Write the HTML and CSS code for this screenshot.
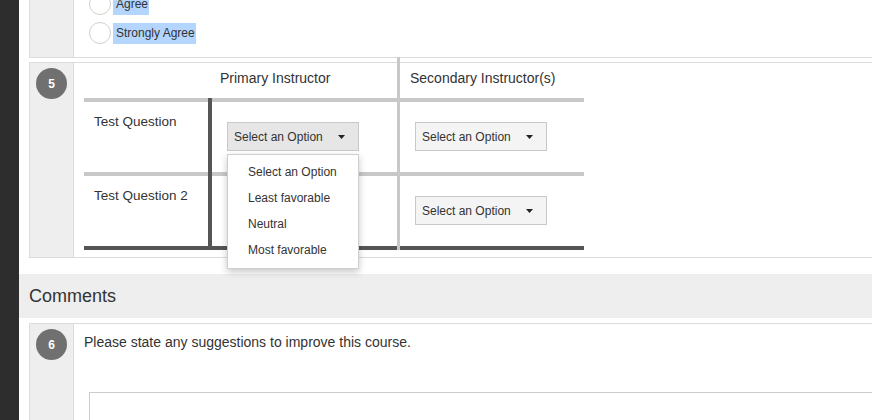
FILE: index.html
```html
<!DOCTYPE html>
<html lang="en">
<head>
<meta charset="utf-8">
<title>Course Evaluation</title>
<link rel="stylesheet" href="styles.css">
</head>
<body>
<div class="sidebar"></div>
<main class="main">
  <section class="card card-first">
    <div class="num-col"></div>
    <div class="card-body">
      <div class="options">
        <div class="option"><span class="radio"></span><span class="opt-label sel">Agree</span></div>
        <div class="option"><span class="radio"></span><span class="opt-label sel">Strongly Agree</span></div>
      </div>
    </div>
  </section>

  <section class="card card-matrix">
    <div class="num-col"><span class="num">5</span></div>
    <div class="card-body matrix-body">
      <div class="matrix">
        <div class="mh mh-primary">Primary Instructor</div>
        <div class="mh mh-secondary">Secondary Instructor(s)</div>

        <div class="hline hline-1"></div>
        <div class="hline hline-2"></div>
        <div class="hline-dark"></div>
        <div class="vline-dark"></div>
        <div class="vline-light"></div>

        <div class="row-label r1">Test Question</div>
        <div class="cell c-primary r1">
          <div class="select-wrap">
            <div class="select open"><span>Select an Option</span><svg class="caret" width="7" height="4" viewBox="0 0 7 4"><polygon points="0,0 7,0 3.5,4" fill="#222"/></svg></div>
            <ul class="menu">
              <li>Select an Option</li>
              <li>Least favorable</li>
              <li>Neutral</li>
              <li>Most favorable</li>
            </ul>
          </div>
        </div>
        <div class="cell c-secondary r1">
          <div class="select"><span>Select an Option</span><svg class="caret" width="7" height="4" viewBox="0 0 7 4"><polygon points="0,0 7,0 3.5,4" fill="#222"/></svg></div>
        </div>

        <div class="row-label r2">Test Question 2</div>
        <div class="cell c-primary r2">
          <div class="select"><span>Select an Option</span><svg class="caret" width="7" height="4" viewBox="0 0 7 4"><polygon points="0,0 7,0 3.5,4" fill="#222"/></svg></div>
        </div>
        <div class="cell c-secondary r2">
          <div class="select"><span>Select an Option</span><svg class="caret" width="7" height="4" viewBox="0 0 7 4"><polygon points="0,0 7,0 3.5,4" fill="#222"/></svg></div>
        </div>
      </div>
    </div>
  </section>

  <h2 class="section-title">Comments</h2>

  <section class="card card-comment">
    <div class="num-col"><span class="num">6</span></div>
    <div class="card-body comment-body">
      <p class="question">Please state any suggestions to improve this course.</p>
      <div class="textarea"></div>
    </div>
  </section>
</main>
</body>
</html>
```
FILE: styles.css
```css
* { box-sizing: border-box; }

html, body {
  margin: 0;
  padding: 0;
  width: 872px;
  height: 420px;
  overflow: hidden;
  background: #fff;
}

body {
  display: flex;
  font-family: "Liberation Sans", Arial, sans-serif;
  color: #333;
}

.sidebar {
  flex: none;
  width: 19px;
  background: #2d2d2d;
}

.main {
  flex: 1;
  min-width: 0;
  overflow: hidden;
}

/* ---------- cards ---------- */
.card {
  display: flex;
  margin: 0 -20px 0 10px;
  border: 1px solid #dcdcdc;
  background: #fff;
}

.num-col {
  flex: none;
  width: 44px;
  background: #eee;
  border-right: 1px solid #dcdcdc;
  display: flex;
  justify-content: center;
  align-items: flex-start;
  padding-top: 5px;
}

.num {
  width: 31px;
  height: 31px;
  border-radius: 50%;
  background: #707070;
  color: #fff;
  font-weight: bold;
  font-size: 12px;
  display: flex;
  align-items: center;
  justify-content: center;
}

.card-body {
  flex: 1;
  min-width: 0;
  padding: 0 10px;
}

/* ---------- first (partial) card ---------- */
.card-first {
  margin-top: -8px;
}

.options {
  display: flex;
  flex-direction: column;
  gap: 7px;
  padding: 0 0 13px 5px;
}

.option {
  display: flex;
  align-items: center;
  gap: 2px;
  height: 22px;
}

.radio {
  width: 22px;
  height: 22px;
  border-radius: 50%;
  border: 1px solid #d4d0c8;
  background: #fff;
}

.opt-label {
  font-size: 12px;
  line-height: 15px;
  padding: 3px 1px 3px 3px;
}

.opt-label.sel {
  background: #b4d5fe;
}

/* ---------- matrix card ---------- */
.card-first + .card-matrix {
  margin-top: 4px;
}

.matrix-body {
  padding-bottom: 7px;
}

.matrix {
  display: grid;
  width: 500px;
  grid-template-columns: 124px 4px 185px 3px 184px;
  grid-template-rows: 35px 4px 70px 4px 70px 4px;
}

.mh {
  grid-row: 1;
  font-size: 14px;
  line-height: 16px;
  padding-top: 7px;
  white-space: nowrap;
}

.mh-primary { grid-column: 3; padding-left: 8px; }
.mh-secondary { grid-column: 5; padding-left: 10px; }

.hline {
  grid-column: 1 / -1;
  background: #c8c8c8;
  position: relative;
  z-index: 1;
}
.hline-1 { grid-row: 2; }
.hline-2 { grid-row: 4; }

.hline-dark {
  grid-column: 1 / -1;
  grid-row: 6;
  background: #555;
  position: relative;
  z-index: 1;
}

.vline-dark {
  grid-column: 2;
  grid-row: 2 / -1;
  background: #555;
  position: relative;
  z-index: 2;
}

.vline-light {
  grid-column: 4;
  grid-row: 1 / -1;
  margin-top: -6px;
  background: #c8c8c8;
  position: relative;
  z-index: 3;
}

.row-label {
  grid-column: 1;
  font-size: 13.5px;
  line-height: 16px;
  padding: 12px 0 0 10px;
  white-space: nowrap;
}

.r1 { grid-row: 3; }
.r2 { grid-row: 5; }

.cell {
  padding: 20px 0 0 15px;
}
.c-primary { grid-column: 3; }
.c-secondary { grid-column: 5; }

.select-wrap {
  position: relative;
  width: 132px;
}

.select {
  width: 132px;
  height: 29px;
  display: flex;
  align-items: center;
  justify-content: space-between;
  padding: 0 13px 0 6px;
  border: 1px solid #c8c8c8;
  background: #f4f4f4;
  font-size: 12px;
  color: #333;
}

.select.open {
  background: #e6e6e6;
}

.caret {
  display: block;
  flex: none;
}

.menu {
  position: absolute;
  top: calc(100% + 3px);
  left: 0;
  width: 132px;
  margin: 0;
  padding: 4px 0 5px;
  list-style: none;
  background: #fff;
  border: 1px solid #cfcfcf;
  box-shadow: 0 3px 7px rgba(0, 0, 0, 0.22);
  z-index: 10;
}

.menu li {
  height: 26px;
  line-height: 26px;
  padding-left: 20px;
  font-size: 12px;
  color: #333;
  white-space: nowrap;
}

/* ---------- comments ---------- */
.section-title {
  margin: 16px 0 5px;
  height: 44px;
  line-height: 44px;
  padding-left: 10px;
  background: #eee;
  font-size: 18px;
  font-weight: normal;
  color: #333;
}

.comment-body {
  padding-top: 10px;
}

.question {
  margin: 0;
  font-size: 14px;
  line-height: 16px;
}

.textarea {
  margin: 42px 0 0 5px;
  height: 120px;
  border: 1px solid #ccc;
  background: #fff;
}
```
